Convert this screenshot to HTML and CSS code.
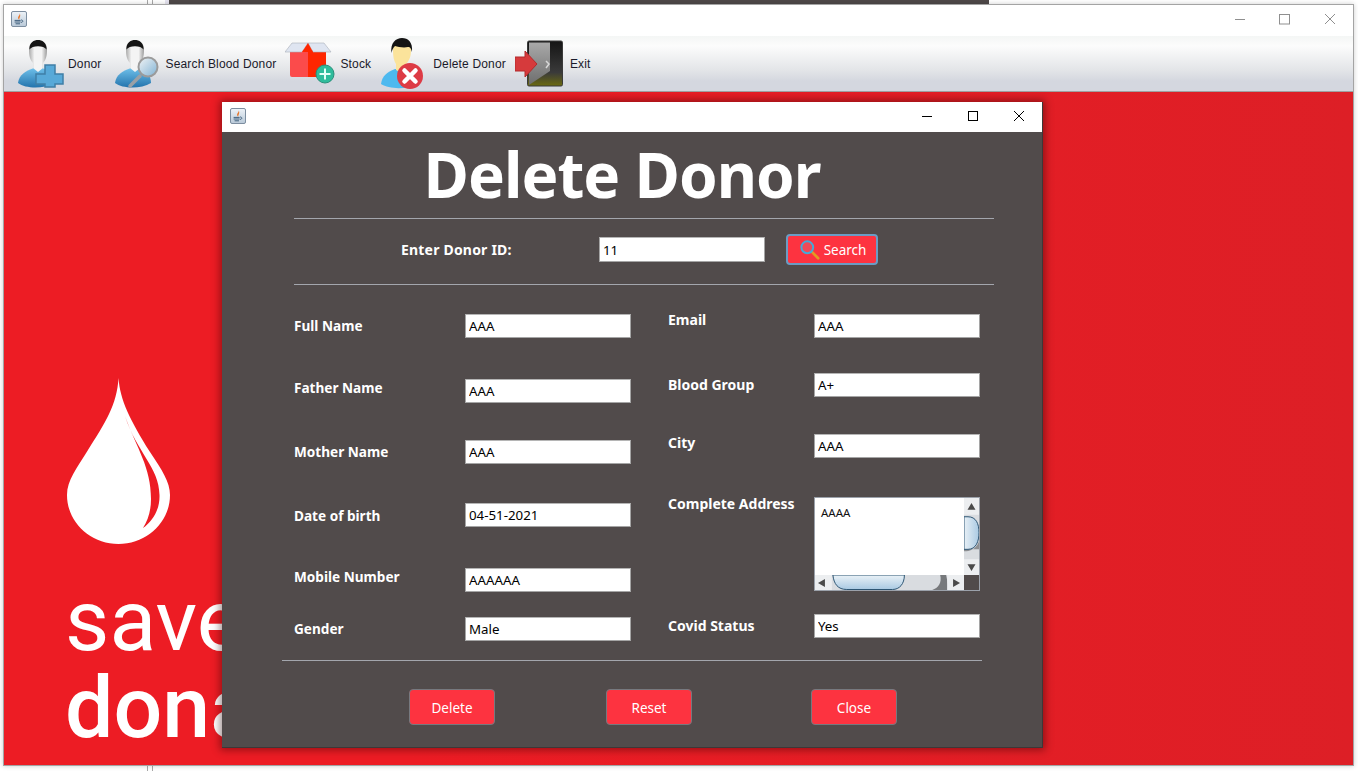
FILE: index.html
```html
<!DOCTYPE html>
<html lang="en">
<head>
<meta charset="utf-8">
<title>Delete Donor</title>
<link rel="stylesheet" href="styles.css">
</head>
<body>
<svg class="defs" width="0" height="0" aria-hidden="true">
  <defs>
    <linearGradient id="javaBg" x1="0" y1="0" x2="0" y2="1"><stop offset="0" stop-color="#eef3f8"/><stop offset="1" stop-color="#b9c9d8"/></linearGradient>
    <linearGradient id="blueBody" x1="0" y1="0" x2="0" y2="1"><stop offset="0" stop-color="#6fc0ea"/><stop offset="1" stop-color="#2474ad"/></linearGradient>
    <linearGradient id="face" x1="0" y1="0" x2="1" y2="0"><stop offset="0" stop-color="#a9a9a9"/><stop offset=".3" stop-color="#f4f4f4"/><stop offset=".7" stop-color="#f4f4f4"/><stop offset="1" stop-color="#9b9b9b"/></linearGradient>
    <linearGradient id="door" x1="0" y1="0" x2="0" y2="1"><stop offset="0" stop-color="#a9a9a9"/><stop offset="1" stop-color="#6d6d6d"/></linearGradient>
    <linearGradient id="doorDark" x1="0" y1="0" x2="0" y2="1"><stop offset="0" stop-color="#151515"/><stop offset=".7" stop-color="#3a3a3a"/><stop offset="1" stop-color="#6b6a10"/></linearGradient>
    <linearGradient id="lens" x1="0" y1="0" x2="1" y2="1"><stop offset="0" stop-color="#f2f4f5"/><stop offset="1" stop-color="#7fb2d4"/></linearGradient>
    <linearGradient id="thumbV" x1="0" y1="0" x2="1" y2="0"><stop offset="0" stop-color="#e8f0f6"/><stop offset="1" stop-color="#a9c9e2"/></linearGradient>
    <linearGradient id="thumbH" x1="0" y1="0" x2="0" y2="1"><stop offset="0" stop-color="#eaf2f7"/><stop offset="1" stop-color="#a9c9e2"/></linearGradient>
    <symbol id="java" viewBox="0 0 16 16">
      <rect x=".5" y=".5" width="15" height="15" rx="1.5" fill="url(#javaBg)" stroke="#7d8ea0"/>
      <path d="M8.6 2C9.6 4 6.6 5 7.2 7.4 7.6 8.4 8.4 8.6 8.4 8.6 7.8 7 10.4 5.6 8.6 2Z" fill="#e8762a"/>
      <path d="M3.6 9.4H9.6M3.6 11H9.6M4.6 12.8H9" stroke="#41617e" stroke-width="1" fill="none"/>
      <path d="M10 9C12.4 8.8 12.4 11.4 10 11.4" stroke="#41617e" fill="none"/>
    </symbol>
    <symbol id="silver" viewBox="0 0 48 50">
      <path d="M2 44C3 36 9 32 18 29H26C33 31 38 36 38 44 28 50 10 50 2 44Z" fill="url(#blueBody)"/>
      <path d="M13 10C13 4 17 2 22 2S31 4 31 10C31 17 30 21 27 24V29L22 33 17 29V24C14 21 13 17 13 10Z" fill="url(#face)"/>
      <path d="M13.4 10.500C13.500 3 18 1 22 1S30.500 3 30.600 10.500C28 6 16 6 13.400 10.500Z" fill="#151515"/>
    </symbol>
  </defs>
</svg>

<div class="desktop">
  <div class="backdrop"><span class="strip"></span></div>
  <span class="rail"></span>

  <section class="window main-window">
    <header class="titlebar main-title">
      <svg class="java-icon"><use href="#java"/></svg>
      <div class="controls grey">
        <svg viewBox="0 0 12 12" class="ctl"><path d="M1 6.500H11"/></svg>
        <svg viewBox="0 0 12 12" class="ctl"><rect x=".5" y="1.500" width="10" height="9.500"/></svg>
        <svg viewBox="0 0 12 12" class="ctl"><path d="M1 1L11 11M11 1L1 11"/></svg>
      </div>
    </header>

    <nav class="toolbar">
      <div class="tool tool-donor">
        <svg class="icon" viewBox="0 0 48 50" width="48" height="50">
          <use href="#silver" width="48" height="50"/>
          <path d="M29 27H39V36H47V46H39V49H29V46H20V36H29Z" fill="#58a9d8" stroke="#3f7fa6" stroke-width="1.500" transform="translate(0 -1)"/>
        </svg>
        <span>Donor</span>
      </div>
      <div class="tool tool-search">
        <svg class="icon" viewBox="0 0 48 50" width="48" height="50">
          <use href="#silver" width="48" height="50"/>
          <path d="M27 37L17 47" stroke="#9aa0a6" stroke-width="3.500" stroke-linecap="round"/>
          <circle cx="35" cy="28" r="9.500" fill="url(#lens)" stroke="#9b9b9b" stroke-width="2"/>
        </svg>
        <span>Search Blood Donor</span>
      </div>
      <div class="tool tool-stock">
        <svg class="icon" viewBox="0 0 50 46" width="50" height="46">
          <path d="M5 9H23V36H7A2 2 0 0 1 5 34Z" fill="#fb4b4b"/>
          <path d="M23 9H41V36H23Z" fill="#ff2600"/>
          <path d="M0 11L7 2H23L17 11ZM46 11L39 2H23L28 11Z" fill="#dfe5f1" stroke="#a9aeb8" stroke-width=".6"/>
          <path d="M23 2L17 11H28Z" fill="#ff2600"/>
          <circle cx="40" cy="33" r="9" fill="#2fbc9c" stroke="#2a8f7a"/>
          <path d="M40 27.500V38.500M34.500 33H45.500" stroke="#e6fff8" stroke-width="2"/>
        </svg>
        <span>Stock</span>
      </div>
      <div class="tool tool-delete">
        <svg class="icon" viewBox="0 0 48 52" width="48" height="52">
          <path d="M1 46C2 38 7 34 15 31H26C32 33 36 38 36 46 26 52 9 51 1 46Z" fill="#4db9ef"/>
          <path d="M13 12C13 6 17 4 22 4S31 6 31 12C31 19 29 23 26 26V32L21 35 16 32V26C14 23 13 19 13 12Z" fill="#fbe39b"/>
          <path d="M11.500 15C10 5 16 0 22 0S33 4 32 14C31 10 30 9 28 9 24 10 18 9 15 8 13 10 12 12 11.500 15Z" fill="#141414"/>
          <circle cx="30" cy="38" r="13" fill="#dd3b45"/>
          <path d="M24.500 32.500L35.500 43.500M35.500 32.500L24.500 43.500" stroke="#fff" stroke-width="4.500" stroke-linecap="round"/>
        </svg>
        <span>Delete Donor</span>
      </div>
      <div class="tool tool-exit">
        <svg class="icon" viewBox="0 0 50 48" width="50" height="48">
          <rect x="12.500" y="1" width="35" height="45" rx="1.500" fill="url(#doorDark)" stroke="#3a3a3a"/>
          <path d="M14 2.500H35V31L14 45Z" fill="url(#door)"/>
          <path d="M31 21L34 24 31 28" fill="none" stroke="#d8d8d8" stroke-width="1.500"/>
          <path d="M0 17H10V11L22 24 10 37V31H0Z" fill="#d63a3c" stroke="#b22a2c"/>
        </svg>
        <span>Exit</span>
      </div>
    </nav>

    <div class="poster">
      <svg class="drop" viewBox="0 0 104 168" width="104" height="168">
        <path d="M51.500 1C53 23 63 43 83 75 95 93 103 105 103 118 103 145 80 167 51.500 167 23 167 0 145 0 118 0 103 10 91 21 73 38 46 50 28 51.500 1Z" fill="#fff"/>
        <path d="M58 39C70 72 84 90 84 122 84 134 81 143 76 151 86 144 93 132 92.500 118 92 90 70 76 58 39Z" fill="#ed1c24"/>
      </svg>
      <p class="save">save</p>
      <p class="donate">dona</p>
    </div>
  </section>

  <section class="window dialog">
    <header class="titlebar dialog-title">
      <svg class="java-icon"><use href="#java"/></svg>
      <div class="controls black">
        <svg viewBox="0 0 12 12" class="ctl"><path d="M1 6.500H11"/></svg>
        <svg viewBox="0 0 12 12" class="ctl"><rect x="1.500" y="1.500" width="9" height="9"/></svg>
        <svg viewBox="0 0 12 12" class="ctl"><path d="M1 1L11 11M11 1L1 11"/></svg>
      </div>
    </header>

    <div class="dialog-body">
      <h1>Delete Donor</h1>
      <hr class="rule">
      <div class="search-row">
        <label class="search-label">Enter Donor ID:</label>
        <input class="text" value="11" readonly>
        <button class="btn btn-search" type="button">
          <svg viewBox="0 0 22 22" width="20" height="20">
            <path d="M12.500 12.500L20 20" stroke="#e39a22" stroke-width="3" stroke-linecap="round"/>
            <circle cx="8" cy="8" r="6.500" fill="#f04a58" stroke="#46a9d8" stroke-width="2.200"/>
          </svg>
          Search
        </button>
      </div>
      <hr class="rule">

      <div class="form">
        <div class="col col-left">
          <div class="field l1"><label>Full Name</label><input class="text" value="AAA" readonly></div>
          <div class="field l2"><label class="up6">Father Name</label><input class="text" value="AAA" readonly></div>
          <div class="field l3"><label>Mother Name</label><input class="text" value="AAA" readonly></div>
          <div class="field l4"><label>Date of birth</label><input class="text" value="04-51-2021" readonly></div>
          <div class="field l5"><label class="up6">Mobile Number</label><input class="text" value="AAAAAA" readonly></div>
          <div class="field l6"><label>Gender</label><input class="text" value="Male" readonly></div>
        </div>
        <div class="col col-right">
          <div class="field"><label class="up12">Email</label><input class="text" value="AAA" readonly></div>
          <div class="field r2"><label>Blood Group</label><input class="text" value="A+" readonly></div>
          <div class="field r3"><label class="up6">City</label><input class="text" value="AAA" readonly></div>
          <div class="field r4 field-top">
            <label>Complete Address</label>
            <div class="address">
              <div class="address-text">AAAA</div>
              <svg class="bar-v" viewBox="0 0 15 78" width="15" height="77" preserveAspectRatio="none">
                <rect width="15" height="78" fill="#d9dce0"/>
                <path d="M0 52H15V44C12 52 6 54 0 54Z" fill="#8d8f92"/>
                <rect width="15" height="17" fill="#eceef0"/>
                <rect y="62" width="15" height="16" fill="#eceef0"/>
                <path d="M0 19H4C12 19 15 26 15 35S12 52 4 52H0Z" fill="url(#thumbV)" stroke="#2d5573"/>
                <path d="M7.500 5L11.500 12H3.500ZM7.500 74L11.500 67H3.500Z" fill="#4a4a4a"/>
              </svg>
              <svg class="bar-h" viewBox="0 0 150 15" width="149" height="15" preserveAspectRatio="none">
                <rect width="150" height="15" fill="#d9dce0"/>
                <path d="M132 0H126C128 8 124 13 118 15H135Z" fill="#77797c"/>
                <rect width="17" height="15" fill="#eceef0"/>
                <rect x="133" width="17" height="15" fill="#eceef0"/>
                <path d="M18 0C19 9 23 14.500 32 14.500H78C85 14.500 90 9 90 0Z" fill="url(#thumbH)" stroke="#2d5573"/>
                <path d="M3 8L10 4V12ZM146 8L139 4V12Z" fill="#4a4a4a"/>
              </svg>
              <div class="bar-corner"></div>
            </div>
          </div>
          <div class="field r5"><label>Covid Status</label><input class="text" value="Yes" readonly></div>
        </div>
      </div>

      <hr class="rule rule-bottom">
      <div class="actions">
        <button class="btn btn-action" type="button">Delete</button>
        <button class="btn btn-action" type="button">Reset</button>
        <button class="btn btn-action" type="button">Close</button>
      </div>
    </div>
  </section>
</div>
</body>
</html>
```

FILE: styles.css
```css
* { box-sizing: border-box; }
html, body { margin: 0; height: 100%; overflow: hidden; background: #fff; }
body { font-family: "Noto Sans", "DejaVu Sans", sans-serif; }
.defs { position: absolute; }
.desktop { position: relative; width: 1358px; height: 771px; overflow: hidden; background: #fff; }

.backdrop { height: 5px; display: flex; padding-left: 165px; }
.strip { width: 824px; height: 4px; background: #4f4949; border-left: 4px solid #e6e4f0; }
.rail { position: absolute; left: 147px; top: 0; width: 6px; height: 771px; border-left: 1px solid #a8a8a8; border-right: 1px solid #a8a8a8; }

.window { position: absolute; display: flex; flex-direction: column; }
.main-window { left: 3px; top: 4px; width: 1351px; height: 762px; background: #fff; border: 1px solid #a4a4a4; box-shadow: 0 0 5px rgba(0,0,0,.2); }
.dialog { left: 222px; top: 102px; width: 821px; height: 646px; background: #514b4b; box-shadow: 0 0 8px 2px rgba(40,0,0,.45); border-right: 1px solid #3d3838; border-bottom: 1px solid #3d3838; }

.titlebar { display: flex; align-items: center; justify-content: space-between; background: #fff; flex: none; }
.main-title { height: 31px; padding: 0 17px 3px 7px; }
.dialog-title { height: 30px; padding: 0 17px 2px 8px; }
.java-icon { width: 16px; height: 16px; flex: none; }
.controls { display: flex; gap: 33px; }
.black { gap: 34px; }
.ctl { width: 12px; height: 12px; fill: none; stroke-width: 1; }
.grey .ctl { stroke: #8f8f8f; }
.black .ctl { stroke: #000; }

.toolbar { height: 56px; flex: none; display: flex; align-items: center; font-family: "Liberation Sans", Arial, sans-serif; font-size: 12px; letter-spacing: .16px; color: #1a1a2a;
  background: linear-gradient(#f4f6f5 0, #fcfcfc 18%, #e3e5e8 62%, #d4d7df 82%, #d4d7df 100%); border-bottom: 1px solid #a0a0a0; padding-left: 12px; }
.tool { display: flex; align-items: center; gap: 4px; }
.icon { display: block; flex: none; }
.tool-search { margin-left: 12px; }
.tool-stock { margin-left: 9px; gap: 5px; }
.tool-delete { margin-left: 9px; gap: 5px; }
.tool-exit { margin-left: 9px; gap: 5px; }

.poster { flex: 1; min-height: 0; padding: 285px 0 0 62px; overflow: hidden; color: #fff; background: linear-gradient(90deg, #ed1c24 0, #ed1c24 30%, #dd1f26 100%); }
.drop { display: block; margin-bottom: 32px; margin-left: 1px; }
.save, .donate { margin: 0 0 0 -1px; font-family: Roboto, sans-serif; font-size: 86px; line-height: 87px; white-space: nowrap; }
.save { font-weight: 400; }
.donate { font-weight: 500; }

.dialog-body { flex: 1; display: flex; flex-direction: column; padding-left: 72px; color: #fff; }
h1 { margin: 0; height: 86px; width: 656px; text-align: center; font-size: 62px; letter-spacing: -1px; line-height: 84px; font-weight: 700; color: #fff; }
.rule { width: 700px; height: 1px; margin: 0; border: 0; background: #a3a6ad; flex: none; }
.search-row { height: 65px; display: flex; align-items: center; padding: 0 0 4px 107px; }
.search-label { width: 198px; font-size: 14px; font-weight: 700; letter-spacing: .2px; }
.text { width: 166px; height: 24px; padding: 0 3px; border: 1px solid #a5a5a5; border-top-color: #b5b5b5; background: #fff; color: #000; font-family: "Noto Sans", sans-serif; font-size: 13.300px; outline: 0; border-radius: 0; flex: none; }
.search-row .text { height: 25px; }
.btn { font-family: "Noto Sans", sans-serif; font-size: 13.500px; color: #fff; background: #fd3340; cursor: default; }
.btn-search { margin-left: 21px; width: 92px; height: 31px; display: flex; align-items: center; justify-content: center; gap: 4px; padding: 0 0 0 2px; border: 2px solid #6a9cc4; border-radius: 4px; }

.form { height: 375px; display: flex; flex: none; }
.col { display: flex; flex-direction: column; padding-top: 29px; }
.col-left { width: 374px; }
.col-right { width: 312px; }
.field { display: flex; align-items: center; height: 24px; flex: none; }
.field label { font-size: 14px; font-weight: 700; white-space: nowrap; margin-bottom: 2px; }
.col-left label { width: 171px; flex: none; font-size: 13.600px; }
.col-right label { width: 146px; flex: none; }
.field label.up6 { margin-bottom: 8px; }
.field label.up12 { margin-bottom: 14px; }
.l2 { margin-top: 41px; }
.l3 { margin-top: 37px; }
.l4 { margin-top: 39px; }
.field.l4 label { margin-bottom: 0; }
.l5 { margin-top: 41px; }
.l6 { margin-top: 25px; }
.r2 { margin-top: 35px; }
.r3 { margin-top: 37px; }
.r4 { margin-top: 39px; }
.r5 { margin-top: 23px; }
.field-top { height: 94px; align-items: flex-start; }
.field-top label { margin-top: -3px; }

.address { width: 166px; height: 94px; display: grid; grid-template-columns: 149px 15px; grid-template-rows: 77px 15px; border: 1px solid #9ba1aa; background: #514b4b; overflow: hidden; }
.address-text { background: #fff; color: #111; font-size: 11.500px; line-height: 16px; padding: 7px 6px; }
.bar-v, .bar-h { display: block; }
.bar-corner { background: #514b4b; }

.rule-bottom { margin-left: -12px; }
.actions { display: flex; padding: 28px 0 0 115px; gap: 111px; }
.btn-action { width: 86px; height: 36px; padding: 2px 0 0; border: 1px solid #76797f; border-radius: 4px; }
.btn-action:nth-child(3) { margin-left: 8px; }
```
